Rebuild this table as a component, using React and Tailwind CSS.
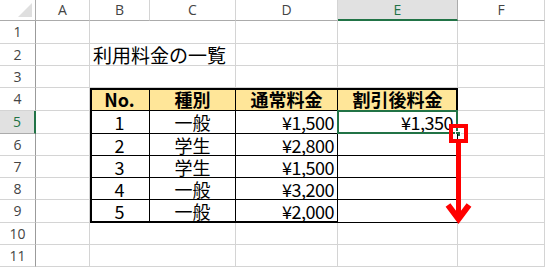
import React from 'react';

const cols = ['A', 'B', 'C', 'D', 'E', 'F'];
const rowNums = [1, 2, 3, 4, 5, 6, 7, 8, 9, 10, 11];

const fees = [
  { no: 1, kind: '一般', price: '¥1,500', discount: '¥1,350' },
  { no: 2, kind: '学生', price: '¥2,800', discount: '' },
  { no: 3, kind: '学生', price: '¥1,500', discount: '' },
  { no: 4, kind: '一般', price: '¥3,200', discount: '' },
  { no: 5, kind: '一般', price: '¥2,000', discount: '' },
];

const ui = { fontFamily: '"Open Sans", "Noto Sans", sans-serif' };
const jp = { fontFamily: '"Noto Sans CJK JP", sans-serif' };

function ColHeader({ label }) {
  const active = label === 'E';
  return (
    <div
      className={
        'flex items-center justify-center border-r text-[14px] leading-none ' +
        (active
          ? 'bg-[#e1e1e1] border-r-[#ababab] border-b-2 border-b-[#217346] text-[#217346]'
          : 'bg-white border-r-[#d4d4d4] border-b border-b-[#ababab] text-[#444]')
      }
      style={ui}
    >
      {label}
    </div>
  );
}

function RowHeader({ n }) {
  const active = n === 5;
  return (
    <div
      className={
        'flex items-center justify-center border-b text-[14px] leading-none ' +
        (active
          ? 'bg-[#e1e1e1] border-b-[#ababab] border-r-2 border-r-[#217346] text-[#217346]'
          : 'bg-white border-b-[#d4d4d4] border-r border-r-[#9b9b9b] text-[#444]')
      }
      style={ui}
    >
      {n}
    </div>
  );
}

function Cell({ children, className = '' }) {
  return (
    <div className={'border-r border-b border-[#d4d4d4] bg-white ' + className}>{children}</div>
  );
}

function FeeTable() {
  const head = 'flex items-center justify-center bg-[#ffe699] border-r border-b border-black font-bold text-[18px] leading-none text-black';
  const body = 'flex items-center border-r border-b border-black bg-white text-[18px] leading-none text-black';
  return (
    <div
      className="col-start-3 col-span-4 row-start-5 row-span-6 grid grid-cols-[60px_86px_102px_120px] grid-rows-[23px_23px_22px_22px_22px_23px] outline-[3px] outline-black -outline-offset-2"
      style={jp}
    >
      <div className={head}>No.</div>
      <div className={head}>種別</div>
      <div className={head}>通常料金</div>
      <div className={head}>割引後料金</div>
      {fees.map((f) => (
        <React.Fragment key={f.no}>
          <div className={body + ' justify-center'}>{f.no}</div>
          <div className={body + ' justify-center'}>{f.kind}</div>
          <div className={body + ' justify-end pr-[3px] tracking-[-0.5px]'}>{f.price}</div>
          <div className={body + ' justify-end pr-[4px] tracking-[-0.5px] relative'}>
            {f.discount}
            {f.no === 1 && (
              <>
                <div className="absolute -left-px -top-px -right-px -bottom-px border-2 border-[#217346]" />
                <div className="absolute -right-[4px] -bottom-[4px] w-[6px] h-[6px] bg-[#217346] border border-white" />
              </>
            )}
          </div>
        </React.Fragment>
      ))}
    </div>
  );
}

export default function App() {
  return (
    <div className="relative w-[545px] h-[267px] overflow-hidden bg-white">
      <div className="grid grid-cols-[36px_54px_60px_86px_102px_120px_87px] grid-rows-[21px_23px_22px_22px_23px_23px_22px_22px_22px_23px_22px_22px]">
        <FeeTable />

        {/* corner */}
        <div className="relative bg-white border-r border-b border-[#ababab]">
          <svg className="absolute right-[3px] bottom-[3px]" width="14" height="14" viewBox="0 0 14 14">
            <polygon points="14,0 14,14 0,14" fill="#dfdfdf" />
          </svg>
        </div>
        {cols.map((c) => (
          <ColHeader key={c} label={c} />
        ))}

        {rowNums.map((n) => {
          const inTable = n >= 4 && n <= 9;
          return (
            <React.Fragment key={n}>
              <RowHeader n={n} />
              <Cell />
              {!inTable && (
                <>
                  <Cell className="col-span-2 flex items-center">
                    {n === 2 && (
                      <span className="pl-[3px] text-[19px] leading-none text-black whitespace-nowrap" style={jp}>
                        利用料金の一覧
                      </span>
                    )}
                  </Cell>
                  <Cell />
                  <Cell />
                </>
              )}
              <Cell className={inTable ? 'col-start-7' : ''} />
            </React.Fragment>
          );
        })}
      </div>

      {/* fill-handle drag annotation */}
      <svg className="absolute left-0 top-0 pointer-events-none" width="545" height="267" viewBox="0 0 545 267">
        <rect x="451" y="126" width="15" height="15" fill="none" stroke="#ff0000" strokeWidth="4" />
        <line x1="458.5" y1="143" x2="458.5" y2="218" stroke="#ff0000" strokeWidth="5" />
        <polyline points="448,205 458.5,219 469,205" fill="none" stroke="#ff0000" strokeWidth="6" strokeLinejoin="miter" />
      </svg>
    </div>
  );
}
